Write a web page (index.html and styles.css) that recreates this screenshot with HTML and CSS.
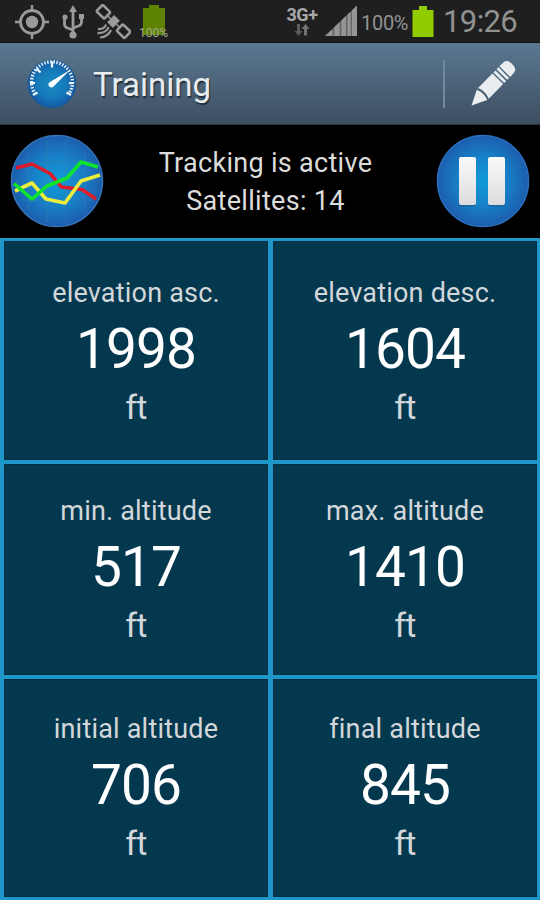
FILE: index.html
```html
<!DOCTYPE html>
<html lang="en">
<head>
<meta charset="UTF-8">
<meta name="viewport" content="width=device-width, initial-scale=1.0">
<title>Training</title>
<link rel="stylesheet" href="styles.css">
</head>
<body>

<div class="status-bar">
    <svg class="icon-gps" width="36" height="36" viewBox="0 0 36 36">
        <circle cx="18" cy="18" r="11.5" fill="none" stroke="#9a9a9a" stroke-width="2.8"/>
        <circle cx="18" cy="18" r="6.2" fill="#9a9a9a"/>
        <path d="M18 1v7M18 28v7M1 18h7M28 18h7" stroke="#9a9a9a" stroke-width="2.4"/>
    </svg>
    <svg class="icon-usb" width="22" height="36" viewBox="0 0 22 36">
        <path d="M11 5v27M2.5 14v6q0 3 3 4l5.5 2M19.500 14v4q0 3-3 4L11 24" fill="none" stroke="#9a9a9a" stroke-width="2.8"/>
        <path d="M11 1l4 7H7z" fill="#9a9a9a"/>
        <circle cx="3" cy="13" r="2.6" fill="#9a9a9a"/>
        <path d="M17 10h5v5h-5z" fill="#9a9a9a"/>
        <circle cx="11" cy="31" r="3.6" fill="#9a9a9a"/>
    </svg>
    <svg class="icon-satellite" width="36" height="36" viewBox="0 0 36 36">
        <g transform="translate(18.500 17.500) rotate(44)" fill="none" stroke="#9a9a9a" stroke-width="2.600">
            <rect x="-19.500" y="-4.500" width="11" height="9" rx="1.500"/>
            <rect x="8.500" y="-4.500" width="11" height="9" rx="1.500"/>
            <path d="M-8 0H8" stroke-width="1.500"/>
            <rect x="-4" y="-5" width="8" height="10" fill="#9a9a9a" stroke="none"/>
        </g>
        <path d="M11 20.500q-1.500 5-8 4.500M13.500 23q-2 6.500-11 6.200M16 26q-3 7-11 7.500" fill="none" stroke="#9a9a9a" stroke-width="2.200"/>
    </svg>
    <div class="battery-note">
        <svg width="24" height="32" viewBox="0 0 24 32">
            <path d="M7 1h10v3h6v27H1V4h6z" fill="#5d8300"/>
        </svg>
        <span>100%</span>
    </div>

    <div class="network">
        <span>3G+</span>
        <svg width="16" height="12" viewBox="0 0 16 12">
            <path d="M3 0h3v7h2.500L4.500 12 .5 7H3z" fill="#5b5b5b"/>
            <path d="M10 11.500h3V5h2.500L11.500 0 7.500 5H10z" fill="#727272"/>
        </svg>
    </div>
    <svg class="icon-signal" width="34" height="32" viewBox="0 0 34 32">
        <path d="M0 31L32 .5V31z" fill="#646464"/>
        <path d="M0 31L7.500 24V31zM9.200 31V22.200L14.700 17V31zM16.300 31V15.500L21 11V31zM22.500 31V9.600L25.700 6.500V31zM27 31V5.200L32 .5V31z" fill="#959595"/>
    </svg>
    <span class="percent">100%</span>
    <svg class="icon-battery" width="22" height="32" viewBox="0 0 22 32">
        <path d="M7 0h8v4h6.500v27H.5V4H7z" fill="#91cc00"/>
    </svg>
    <span class="clock">19:26</span>
</div>

<div class="action-bar">
    <svg class="icon-gauge" width="50" height="50" viewBox="0 0 50 50">
        <defs>
            <radialGradient id="gauge">
                <stop offset="0" stop-color="#198cc0"/>
                <stop offset="0.6" stop-color="#1579ba"/>
                <stop offset="1" stop-color="#1559a2"/>
            </radialGradient>
        </defs>
        <circle cx="25" cy="25" r="24" fill="url(#gauge)" stroke="#24598d" stroke-width="1"/>
        <path d="M8.200 35A20.500 20.500 0 1 1 41.800 35" fill="none" stroke="#e6f1fa" stroke-width="3.400" stroke-dasharray="1.500 1.550"/>
        <path d="M6 36l4.500-2.500M44 36l-4.500-2.500M25 2.500v6M9.500 9.500l4 4M3 24h5M42 24h5" stroke="#f2f8fc" stroke-width="2.200"/>
        <path d="M43 11L26.500 27.500a2.900 2.900 0 1 1-3.500-4.500z" fill="#fff"/>
    </svg>
    <h1>Training</h1>
    <span class="divider"></span>
    <svg class="icon-pencil" width="46" height="46" viewBox="0 0 46 46">
        <g transform="translate(1.500 44.500) rotate(-45.500)" fill="#e9edf0">
            <path d="M0 0L15 -7.300Q18 0 15 7.300z"/>
            <path d="M17 -7.500H37.500V7.500H17Q20 0 17 -7.500z"/>
            <path d="M39 -7.500h2.800V7.500H39zM43.300 -7.500h2.800V7.500H43.300z"/>
            <path d="M47.500 -7.500h4q6.500 0 6.500 6v3q0 6-6.500 6h-4z"/>
        </g>
    </svg>
</div>

<div class="tracking">
    <svg width="94" height="94" viewBox="0 0 94 94">
        <defs>
            <radialGradient id="ball">
                <stop offset="0" stop-color="#129ad8"/>
                <stop offset="0.5" stop-color="#1783c9"/>
                <stop offset="1" stop-color="#1c5eae"/>
            </radialGradient>
        </defs>
        <circle cx="47" cy="47" r="45.500" fill="url(#ball)" stroke="#3472b6" stroke-width="1.500"/>
        <path d="M18 18v58M37 6v82M56 6v82M75 18v58M10 28h74M6 47h82M10 66h74" stroke="#3a86ad" stroke-width="1" opacity="0.450"/>
        <g fill="none" stroke-width="3.600" stroke-linejoin="round">
            <path d="M6 34L22 30 40 39.500 51.500 53 72 55.500 86 65" stroke="#dc1c2c"/>
            <path d="M5 57L22 49 36 65 55 69 71 47 90 41" stroke="#eded3c"/>
            <path d="M4 49.500L22 65 37 52 57 44 71 28 88 33" stroke="#10e32c"/>
        </g>
    </svg>
    <p>Tracking is active<br>Satellites: 14</p>
    <svg width="94" height="94" viewBox="0 0 94 94">
        <defs>
            <linearGradient id="bar" x2="0" y2="1">
                <stop offset="0" stop-color="#fafafa"/>
                <stop offset="1" stop-color="#dcdcdf"/>
            </linearGradient>
        </defs>
        <circle cx="47" cy="47" r="45.500" fill="url(#ball)" stroke="#2a70bd" stroke-width="1.500"/>
        <path d="M24 25h15v47H24zM53 25h15v47H53z" fill="#18649f" stroke="#18649f" stroke-linejoin="round"/>
        <rect x="23" y="23" width="17" height="48" rx="2" fill="url(#bar)"/>
        <rect x="52" y="23" width="17" height="48" rx="2" fill="url(#bar)"/>
    </svg>
</div>

<div class="grid">
    <div class="cell">
        <span class="label">elevation asc.</span>
        <span class="value">1998</span>
        <span class="unit">ft</span>
    </div>
    <div class="cell">
        <span class="label">elevation desc.</span>
        <span class="value">1604</span>
        <span class="unit">ft</span>
    </div>
    <div class="cell middle">
        <span class="label">min. altitude</span>
        <span class="value">517</span>
        <span class="unit">ft</span>
    </div>
    <div class="cell middle">
        <span class="label">max. altitude</span>
        <span class="value">1410</span>
        <span class="unit">ft</span>
    </div>
    <div class="cell last">
        <span class="label">initial altitude</span>
        <span class="value">706</span>
        <span class="unit">ft</span>
    </div>
    <div class="cell last">
        <span class="label">final altitude</span>
        <span class="value">845</span>
        <span class="unit">ft</span>
    </div>
</div>

</body>
</html>
```
FILE: styles.css
```css
* {
    box-sizing: border-box;
}
body {
    margin: 0;
    width: 540px;
    height: 900px;
    overflow: hidden;
    background: #000;
    font-family: Roboto, "Noto Sans", sans-serif;
}
svg {
    display: block;
    flex-shrink: 0;
}
.status-bar {
    display: flex;
    align-items: flex-start;
    height: 43px;
    padding: 4px 0 0 14px;
    background: #1f1f1f;
    border-bottom: 1px solid #121212;
    color: #929292;
}
.icon-usb {
    margin-left: 12px;
}
.icon-satellite {
    margin-left: 11px;
}
.battery-note {
    position: relative;
    margin-left: 11px;
}
.battery-note span {
    position: absolute;
    left: -3px;
    top: 23px;
    font-size: 12px;
    line-height: 12px;
    color: #a3a890;
}
.network {
    display: flex;
    flex-direction: column;
    align-items: center;
    width: 34px;
    margin: 2px 0 0 119px;
    font-size: 18px;
    line-height: 18px;
    font-weight: bold;
    letter-spacing: -0.5px;
    color: #a8a8a8;
}
.icon-signal {
    margin: 1px 0 0 6px;
}
.percent {
    width: 49px;
    margin: 7px 0 0 2px;
    font-size: 20px;
    line-height: 24px;
    letter-spacing: -0.3px;
}
.icon-battery {
    margin: 2px 0 0 2px;
}
.clock {
    margin-left: 9px;
    font-size: 31px;
    line-height: 36px;
    letter-spacing: -0.6px;
}
.action-bar {
    display: flex;
    align-items: center;
    height: 82px;
    padding: 0 24px 0 27px;
    background: linear-gradient(#5a7891, #3d4f61);
    border-bottom: 1px solid #26343d;
}
.action-bar h1 {
    flex: 1;
    margin: 2px 0 0 16px;
    font-size: 33px;
    line-height: 40px;
    font-weight: normal;
    color: #e9edf0;
    text-shadow: 1px 2px 1px #23303c;
}
.divider {
    width: 2px;
    height: 48px;
    margin-right: 25px;
    background: #7189a0;
}
.tracking {
    display: flex;
    align-items: center;
    justify-content: space-between;
    height: 113px;
    padding: 0 10px 2px;
}
.tracking p {
    margin: 3px 9px 0 0;
    font-size: 27px;
    line-height: 38px;
    letter-spacing: 0.3px;
    color: #dcdcdc;
    text-align: center;
}
.grid {
    display: grid;
    grid-template-columns: 264px 264px;
    grid-template-rows: 219px 211px 218px;
    gap: 4px 5px;
    height: 662px;
    padding: 3px 3px 3px 4px;
    background: #1d97ca;
}
.cell {
    display: flex;
    flex-direction: column;
    align-items: center;
    padding-top: 35px;
    background: #04384f;
    border: 1px solid #052e43;
    color: #d3d7da;
}
.middle {
    padding-top: 30px;
}
.last {
    padding-top: 33px;
}
.label {
    font-size: 27px;
    line-height: 32px;
    letter-spacing: 0.2px;
}
.value {
    font-size: 55px;
    line-height: 80px;
    letter-spacing: -0.9px;
    color: #fff;
}
.unit {
    font-size: 34px;
    line-height: 37px;
    letter-spacing: -0.8px;
}
```
